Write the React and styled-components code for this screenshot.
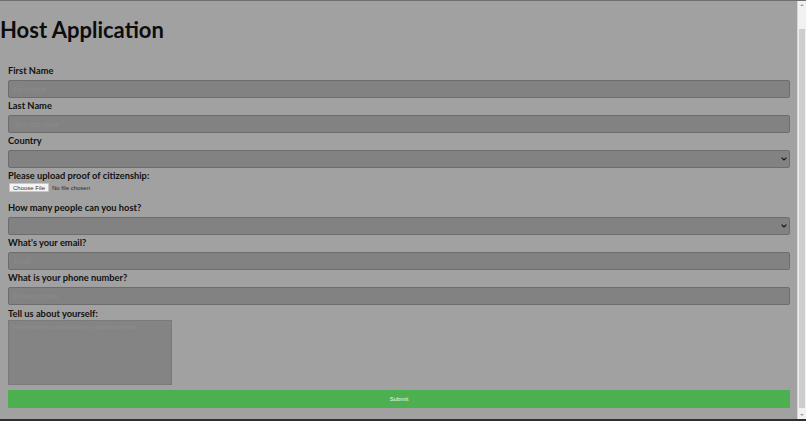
import React from "react"
import styled, { createGlobalStyle } from "styled-components"

const GlobalStyle = createGlobalStyle`
  html, body {
    margin: 0;
    height: 100%;
    overflow: hidden;
    background: #a1a1a1;
  }
  #root {
    height: 100%;
  }
`

const chevron =
  "url(\"data:image/svg+xml;utf8,<svg xmlns='http://www.w3.org/2000/svg' width='6' height='4' viewBox='0 0 6 4'><path d='M0.6 0.6 L3 3 L5.4 0.6' fill='none' stroke='%23111' stroke-width='1.1'/></svg>\")"

const Frame = styled.div`
  display: flex;
  height: 100%;
  box-sizing: border-box;
  border-top: 1px solid #6c7070;
  border-bottom: 2px solid #2e2e2e;
  font-family: Lato, "Noto Sans", sans-serif;
`

const Page = styled.main`
  flex: 1;
  min-width: 0;
  padding-right: 7px;
`

const Title = styled.h1`
  margin: 15px 0 19px;
  font-size: 22px;
  line-height: 28px;
  font-weight: 700;
  color: #0d0d0d;
`

const Form = styled.form`
  display: flex;
  flex-direction: column;
  padding-left: 8px;
`

const Field = styled.div`
  display: flex;
  flex-direction: column;
  margin-bottom: ${(p) => p.$gap || 0}px;
`

const Label = styled.label`
  font-size: 9.3px;
  line-height: ${(p) => (p.$short ? 12 : 15)}px;
  font-weight: 700;
  color: #111;
  margin-bottom: ${(p) => (p.$tight ? 0 : 2)}px;
`

const fieldBox = `
  box-sizing: border-box;
  height: 18px;
  width: 100%;
  background-color: #828282;
  border: 1px solid #6d6d6d;
  border-radius: 2px;
  font-family: inherit;
  font-size: 7px;
  padding: 0 5px;
  color: #222;
  outline: none;
`

const TextInput = styled.input`
  ${fieldBox}
  &::placeholder {
    color: #8b8b8b;
  }
`

const Select = styled.select`
  ${fieldBox}
  appearance: none;
  padding: 0 2px;
  background-image: ${chevron};
  background-repeat: no-repeat;
  background-position: right 2px center;
  background-size: 6px 4px;
`

const FileInput = styled.input`
  font-family: "Liberation Sans", Arial, sans-serif;
  font-size: 6px;
  color: #2a2a2a;
  height: 9px;
  margin: 0 0 0 1px;
  &::file-selector-button {
    font-family: inherit;
    font-size: 6px;
    height: 9px;
    padding: 0 3px;
    margin-right: 3px;
    background: #f4f4f4;
    border: 1px solid #c8c8c8;
    border-radius: 1px;
    color: #333;
  }
`

const TextArea = styled.textarea`
  box-sizing: border-box;
  width: 164px;
  height: 65px;
  background: #848484;
  border: 1px solid #7a7a7a;
  font-family: inherit;
  font-size: 6px;
  padding: 2px;
  resize: none;
  outline: none;
  &::placeholder {
    color: #8e8e8e;
  }
`

const SubmitButton = styled.button`
  height: 18px;
  margin-top: 5px;
  width: 100%;
  border: none;
  background: #4caf50;
  color: #f4f4f4;
  font-family: "Liberation Sans", Arial, sans-serif;
  font-size: 6px;
  padding: 0;
`

const ScrollTrack = styled.div`
  width: 8px;
  display: flex;
  flex-direction: column;
  background: #f1f1f1;
  border-left: 1px solid #d6d6d6;
`

const Arrow = styled.div`
  height: 8px;
  display: flex;
  align-items: center;
  justify-content: center;
  &::before {
    content: "";
    border-left: 2px solid transparent;
    border-right: 2px solid transparent;
    ${(p) =>
      p.$down
        ? "border-top: 2px solid #a3a3a3;"
        : "border-bottom: 2px solid #a3a3a3;"}
  }
`

const Thumb = styled.div`
  flex: 1;
  margin: 20px 1px 3px;
  background: #cdcdcd;
`

const App = () => {
  return (
    <Frame>
      <GlobalStyle />
      <Page>
        <Title>Host Application</Title>
        <Form onSubmit={(e) => e.preventDefault()}>
          <Field>
            <Label htmlFor="firstName">First Name</Label>
            <TextInput id="firstName" placeholder="First name" />
          </Field>
          <Field>
            <Label htmlFor="lastName">Last Name</Label>
            <TextInput id="lastName" placeholder="Your last name" />
          </Field>
          <Field>
            <Label htmlFor="country">Country</Label>
            <Select id="country" defaultValue="">
              <option value=""></option>
            </Select>
          </Field>
          <Field $gap={8}>
            <Label htmlFor="proof" $tight>
              Please upload proof of citizenship:
            </Label>
            <FileInput id="proof" type="file" />
          </Field>
          <Field>
            <Label htmlFor="guests">How many people can you host?</Label>
            <Select id="guests" defaultValue="">
              <option value=""></option>
            </Select>
          </Field>
          <Field>
            <Label htmlFor="email">What's your email?</Label>
            <TextInput id="email" type="email" placeholder="Email" />
          </Field>
          <Field $gap={3}>
            <Label htmlFor="phone">What is your phone number?</Label>
            <TextInput id="phone" type="tel" placeholder="Phone number" />
          </Field>
          <Field>
            <Label htmlFor="about" $tight $short>
              Tell us about yourself:
            </Label>
            <TextArea
              id="about"
              placeholder="Tell us what you would like your guests to know"
            />
          </Field>
          <SubmitButton type="submit">Submit</SubmitButton>
        </Form>
      </Page>
      <ScrollTrack>
        <Arrow />
        <Thumb />
        <Arrow $down />
      </ScrollTrack>
    </Frame>
  )
}

export default App
